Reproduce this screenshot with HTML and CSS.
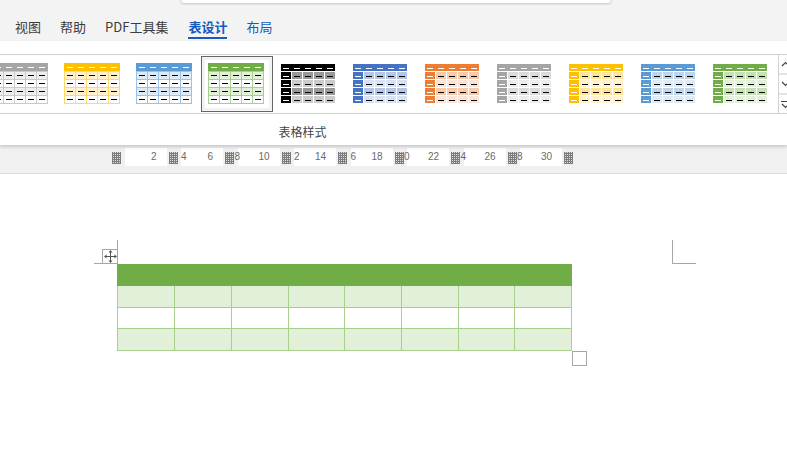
FILE: index.html
```html
<!DOCTYPE html>
<html lang="zh">
<head>
<meta charset="utf-8">
<title>表设计</title>
<link rel="stylesheet" href="styles.css">
</head>
<body>
<svg class="defs" width="0" height="0" aria-hidden="true">
  <symbol id="banded" viewBox="0 0 56 41">
    <rect class="head" width="56" height="8"/>
    <rect class="tint" y="8" width="56" height="8"/>
    <rect class="tint" y="24" width="56" height="8"/>
    <path class="grid" d="M.5 8v33M11.5 8v33M22.5 8v33M33.5 8v33M44.5 8v33M55.5 8v33M0 8.500h56M0 16.500h56M0 24.500h56M0 32.500h56M0 40.500h56"/>
    <path class="dash-w" d="M3 4.500h6M14 4.500h6M25 4.500h6M36 4.500h6M47 4.500h6"/>
    <path class="dash-k" d="M3 12.500h6M14 12.500h6M25 12.500h6M36 12.500h6M47 12.500h6M3 20.500h6M14 20.500h6M25 20.500h6M36 20.500h6M47 20.500h6M3 28.500h6M14 28.500h6M25 28.500h6M36 28.500h6M47 28.500h6M3 36.500h6M14 36.500h6M25 36.500h6M36 36.500h6M47 36.500h6"/>
  </symbol>
  <symbol id="column" viewBox="0 0 54 40">
    <rect class="head" width="54" height="7"/>
    <rect class="strong" x="11" y="8" width="43" height="7"/>
    <rect class="tint" x="11" y="16" width="43" height="7"/>
    <rect class="strong" x="11" y="24" width="43" height="7"/>
    <rect class="tint" x="11" y="32" width="43" height="7"/>
    <rect class="head" y="8" width="10" height="7"/>
    <rect class="head" y="16" width="10" height="7"/>
    <rect class="head" y="24" width="10" height="7"/>
    <rect class="head" y="32" width="10" height="7"/>
    <path class="gap" d="M21.500 8v31M32.500 8v31M43.500 8v31"/>
    <path class="dash-w" d="M2 4.500h6M13 4.500h6M24 4.500h6M35 4.500h6M46 4.500h6M2 12.500h6M2 20.500h6M2 28.500h6M2 36.500h6"/>
    <path class="dash-k" d="M13 12.500h6M24 12.500h6M35 12.500h6M46 12.500h6M13 20.500h6M24 20.500h6M35 20.500h6M46 20.500h6M13 28.500h6M24 28.500h6M35 28.500h6M46 28.500h6M13 36.500h6M24 36.500h6M35 36.500h6M46 36.500h6"/>
  </symbol>
</svg>

<header class="tabbar">
  <div class="search-edge"></div>
  <nav class="tabs">
    <span class="tab">视图</span>
    <span class="tab">帮助</span>
    <span class="tab">PDF工具集</span>
    <span class="tab tab-active">表设计</span>
    <span class="tab tab-link">布局</span>
  </nav>
</header>

<section class="ribbon">
  <div class="gallery-row">
    <div class="gallery">
      <div class="thumb t-grey"><svg class="sw-banded"><use href="#banded"/></svg></div>
      <div class="thumb t-gold"><svg class="sw-banded"><use href="#banded"/></svg></div>
      <div class="thumb t-blue"><svg class="sw-banded"><use href="#banded"/></svg></div>
      <div class="thumb thumb-selected t-green"><svg class="sw-banded"><use href="#banded"/></svg></div>
      <div class="thumb t-black"><svg class="sw-column"><use href="#column"/></svg></div>
      <div class="thumb t-indigo"><svg class="sw-column"><use href="#column"/></svg></div>
      <div class="thumb t-orange"><svg class="sw-column"><use href="#column"/></svg></div>
      <div class="thumb t-grey"><svg class="sw-column"><use href="#column"/></svg></div>
      <div class="thumb t-gold"><svg class="sw-column"><use href="#column"/></svg></div>
      <div class="thumb t-blue"><svg class="sw-column"><use href="#column"/></svg></div>
      <div class="thumb t-green"><svg class="sw-column"><use href="#column"/></svg></div>
    </div>
    <div class="scroller">
      <div class="scroll-btn"><svg width="9" height="6" viewBox="0 0 9 6"><path d="M1 5l3.500-3.500L8 5"/></svg></div>
      <div class="scroll-btn"><svg width="9" height="6" viewBox="0 0 9 6"><path d="M1 1l3.500 3.500L8 1"/></svg></div>
      <div class="scroll-btn"><svg width="9" height="9" viewBox="0 0 9 9"><path d="M0 1.500h9M1 4l3.500 3.500L8 4"/></svg></div>
    </div>
  </div>
  <div class="group-label">表格样式</div>
</section>

<div class="ruler">
  <div class="tick"><i class="hatch"></i><div class="seg"><span></span><span>2</span></div></div>
  <div class="tick"><i class="hatch"></i><div class="seg"><span>4</span><span>6</span></div></div>
  <div class="tick"><i class="hatch"></i><div class="seg"><span class="lap">8</span><span>10</span></div></div>
  <div class="tick"><i class="hatch"></i><div class="seg"><span>2</span><span>14</span></div></div>
  <div class="tick"><i class="hatch"></i><div class="seg"><span>6</span><span>18</span></div></div>
  <div class="tick"><i class="hatch"></i><div class="seg"><span class="lap">0</span><span>22</span></div></div>
  <div class="tick"><i class="hatch"></i><div class="seg"><span class="lap">4</span><span>26</span></div></div>
  <div class="tick"><i class="hatch"></i><div class="seg"><span class="lap">8</span><span>30</span></div></div>
  <i class="hatch"></i>
</div>

<main class="page">
  <div class="sheet">
    <div class="crop crop-left"></div>
    <div class="crop crop-right"></div>
    <div class="move-handle">
      <svg width="13" height="13" viewBox="0 0 13 13"><path class="move-line" d="M6.500 1.500v10M1.500 6.500h10"/><path class="move-tip" d="M6.500 0l2 2.500h-4zM6.500 13l2-2.500h-4zM0 6.500l2.500-2v4zM13 6.500l-2.500-2v4z"/></svg>
    </div>
    <table class="doc-table">
      <colgroup><col><col><col><col><col><col><col><col></colgroup>
      <tr class="r-head"><td></td><td></td><td></td><td></td><td></td><td></td><td></td><td></td></tr>
      <tr class="r-band r-a"><td></td><td></td><td></td><td></td><td></td><td></td><td></td><td></td></tr>
      <tr class="r-plain"><td></td><td></td><td></td><td></td><td></td><td></td><td></td><td></td></tr>
      <tr class="r-band r-a"><td></td><td></td><td></td><td></td><td></td><td></td><td></td><td></td></tr>
    </table>
    <div class="resize-handle"></div>
  </div>
</main>
</body>
</html>
```

FILE: styles.css
```css
* { box-sizing: border-box; }

html, body {
  margin: 0;
  height: 100%;
  overflow: hidden;
  background: #fff;
  font-family: "Noto Sans CJK SC", "Liberation Sans", sans-serif;
}

.defs { position: absolute; }

.tabbar {
  position: relative;
  height: 41px;
  background: #f3f3f3;
  padding-top: 16px;
}

.search-edge {
  position: absolute;
  left: 180px;
  top: -8px;
  width: 432px;
  height: 12px;
  background: #fff;
  border: 1px solid #d4d4d4;
  border-radius: 4px;
  box-shadow: 0 1px 1px rgba(0, 0, 0, .08);
}

.tabs {
  display: flex;
  gap: 19px;
  padding-left: 15px;
  font-size: 13px;
  line-height: 21px;
  color: #3c3c3c;
}

.tab { height: 23px; white-space: nowrap; }

.tab-active {
  margin-left: 1px;
  color: #185abd;
  font-weight: 700;
  border-bottom: 2px solid #185abd;
}

.tab-link { color: #185abd; }

.ribbon {
  height: 104px;
  background: #fff;
  padding-top: 13px;
  box-shadow: 0 2px 3px rgba(0, 0, 0, .16);
  position: relative;
}

.gallery-row {
  display: flex;
  justify-content: space-between;
  height: 60px;
  border-top: 1px solid #d2d2d2;
  border-bottom: 1px solid #d2d2d2;
  overflow: hidden;
}

.gallery {
  display: flex;
  margin-left: -16px;
}

.thumb {
  width: 72px;
  height: 56px;
  margin-top: 1px;
  flex: none;
  display: flex;
  justify-content: center;
  align-items: flex-start;
}

.thumb-selected {
  margin-left: 1px;
  margin-right: -1px;
  border: 1px solid #666;
  box-shadow: inset 0 0 0 3px #f3f3f3;
}

.sw-banded { width: 56px; height: 41px; margin-top: 7px; }
.sw-column { width: 54px; height: 40px; margin-top: 8px; }
.thumb-selected .sw-banded { margin: 6px 2px 0 0; }

.head { fill: var(--head); }
.tint { fill: var(--tint); }
.strong { fill: var(--strong); }
.grid { fill: none; stroke: var(--line); stroke-width: 1; }
.gap { fill: none; stroke: #fff; stroke-width: 1; }
.dash-w { fill: none; stroke: #fff; stroke-width: 1; }
.dash-k { fill: none; stroke: #000; stroke-width: 1; }

.t-grey   { --head: #a5a5a5; --tint: #ededed; --strong: #dbdbdb; --line: #c9c9c9; }
.t-gold   { --head: #ffc000; --tint: #fff2cc; --strong: #ffe599; --line: #ffd966; }
.t-blue   { --head: #5b9bd5; --tint: #deeaf6; --strong: #bdd6ee; --line: #9cc2e5; }
.t-green  { --head: #70ad47; --tint: #e2efd9; --strong: #c5e0b3; --line: #a8d08d; }
.t-black  { --head: #000; --tint: #cbcbcb; --strong: #999; --line: #666; }
.t-indigo { --head: #4472c4; --tint: #d9e2f3; --strong: #b4c6e7; --line: #8eaadb; }
.t-orange { --head: #ed7d31; --tint: #fbe4d5; --strong: #f7caac; --line: #f4b083; }

.scroller {
  width: 9px;
  flex: none;
  border-left: 1px solid #d2d2d2;
  display: flex;
  flex-direction: column;
  background: #fff;
}

.scroll-btn {
  flex: 1;
  display: flex;
  align-items: center;
  padding-left: 2px;
  border-bottom: 2px solid #e2e2e2;
  overflow: hidden;
}

.scroll-btn:last-child { border-bottom: 0; }

.scroll-btn svg { flex: none; fill: none; stroke: #444; stroke-width: 1.200; }

.group-label {
  text-align: center;
  padding-right: 182px;
  padding-top: 9px;
  font-size: 12px;
  line-height: 18px;
  color: #444;
}

.ruler {
  height: 29px;
  background: #f0f0f0;
  border-bottom: 1px solid #dcdcdc;
  padding: 3px 0 0 112px;
  display: grid;
  grid-template-columns: repeat(8, 56.500px) 9px;
  align-content: start;
}

.tick { display: flex; height: 18px; }

.hatch {
  display: block;
  flex: none;
  width: 9px;
  height: 12px;
  margin-top: 4px;
  background-color: #dcdcdc;
  background-image:
    repeating-linear-gradient(90deg, #7c7c7c 0 1px, transparent 1px 2px),
    repeating-linear-gradient(0deg, #7c7c7c 0 1px, transparent 1px 2px);
}

.seg {
  flex: 1;
  margin: 0 2px 0 3.500px;
  background: #fff;
  display: flex;
  justify-content: space-between;
  padding-right: 10px;
  font: 10px/18px "Liberation Sans", sans-serif;
  color: #6a6a6a;
}

.lap { margin-left: -3px; }

.page {
  background: #fff;
  padding-top: 66px;
}

.sheet {
  position: relative;
  height: 130px;
  padding: 24px 0 0 117px;
}

.crop {
  position: absolute;
  top: 0;
  width: 24px;
  height: 24px;
  border-bottom: 1px solid #a6a6a6;
}

.crop-left { left: 94px; border-right: 1px solid #a6a6a6; }
.crop-right { left: 672px; border-left: 1px solid #a6a6a6; }

.move-handle {
  position: absolute;
  left: 102px;
  top: 9px;
  width: 16px;
  height: 15px;
  background: #fff;
  border: 1px solid #a6a6a6;
  display: flex;
  align-items: center;
  justify-content: center;
}

.move-line { fill: none; stroke: #555; stroke-width: 1; }
.move-tip { fill: #555; }

.doc-table {
  table-layout: fixed;
  border-collapse: separate;
  border-spacing: 0;
  width: 455px;
}

.doc-table col { width: 57px; }
.doc-table col:nth-child(1) { width: 58px; }
.doc-table col:nth-child(4),
.doc-table col:nth-child(7) { width: 56px; }

.doc-table td {
  padding: 0;
  border-right: 1px solid #a8d08d;
  border-bottom: 1px solid #a8d08d;
}

.doc-table td:first-child { border-left: 1px solid #a8d08d; }

.r-head td { height: 22px; background: #70ad47; border-color: #70ad47 !important; }
.r-band td { height: 22px; background: #e2efd9; }
.r-plain td { height: 21px; background: #fff; }

.resize-handle {
  position: absolute;
  left: 572px;
  top: 111px;
  width: 15px;
  height: 15px;
  background: #fff;
  border: 1px solid #a6a6a6;
}
```
